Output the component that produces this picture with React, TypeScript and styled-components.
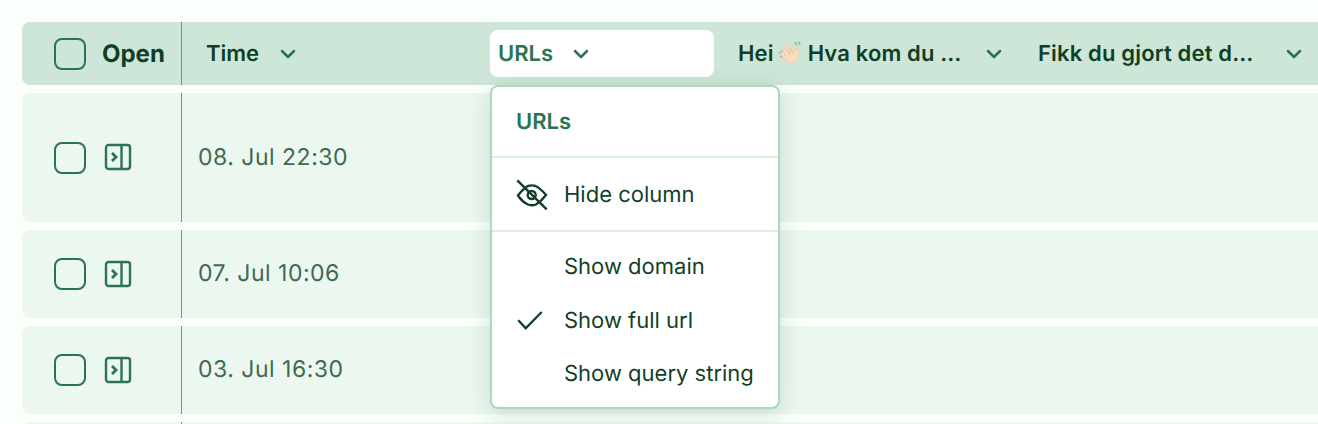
import React from 'react'
import styled, { createGlobalStyle } from 'styled-components'
import { ChevronDown } from 'lucide-react'

const GlobalStyle = createGlobalStyle`
  html, body {
    margin: 0;
    background: #fbfffc;
    font-family: Inter, "Liberation Sans", sans-serif;
    text-rendering: geometricPrecision;
  }
`

const rows = [
  { id: 1, time: '08. Jul 22:30', height: 129 },
  { id: 2, time: '07. Jul 10:06', height: 88 },
  { id: 3, time: '03. Jul 16:30', height: 88 },
  { id: 4, time: '', height: 88 },
]

const WaveIcon = () => (
  <svg width="26" height="26" viewBox="0 0 24 24">
    <path d="M1 11.500l3-2.500M2 15l2-1.500M15.500 1l2 3M18.500 .5l2 3" stroke="#9aaca4" strokeWidth="1.300" fill="none" />
    <path
      d="M5 7.500c.7-1.200 2-1 3 0L6.500 4.800c-.7-1.500 1.300-2.500 2.300-1.200l2.200 3-.6-1.600c-.4-1.500 1.700-2.200 2.400-.8l3.200 6 .6-2c.6-1.500 2.800-1.200 2.800.5 0 3-.2 5.800-1.200 8.500-1.500 4-6 5-9.200 2.800-2.500-1.800-4.800-5-6.500-8-.8-1.400 1-2.500 2-1.400L7 13.500 5 9.500c-.4-.8-.3-1.400 0-2z"
      fill="#f8dcbf"
      stroke="#ecc8a2"
      strokeWidth="0.600"
    />
    <path d="M8.500 7.500l3.200 5.500M11 6.500l3 5.200" stroke="#dcae84" strokeWidth="0.700" fill="none" />
  </svg>
)

const OpenIcon = () => (
  <svg width="28" height="28" viewBox="0 0 28 28" fill="none" stroke="#2c7350" strokeWidth="2.400">
    <rect x="2" y="2" width="24" height="24" rx="2.500" />
    <path d="M17.500 2v24" />
    <path d="M8 10l4 4-4 4" strokeWidth="2.800" />
  </svg>
)

const HiddenEyeIcon = () => (
  <svg width="32" height="32" viewBox="0 0 32 32" fill="none" stroke="#123f26" strokeWidth="2.400">
    <path d="M2 16.500c3-4 6-7.500 10-9.500 2.500-.8 5-.8 7.500 0 4.500 2 7.500 5.500 10.500 9-3 4-6 7-10 9.500-2.500 1-5.500 1-8 0-4-2-7.500-5-10-9z" />
    <circle cx="15.700" cy="16" r="4" />
    <path d="M1.300 1.300l29.400 29" />
  </svg>
)

const CheckIcon = () => (
  <svg width="32" height="32" viewBox="0 0 32 32" fill="none" stroke="#123f26" strokeWidth="2.400">
    <path d="M2.300 15.300l7.400 8L25.700 7" />
  </svg>
)

const App = () => {
  return (
    <Page>
      <GlobalStyle />
      <Table>
        <HeaderRow>
          <FixedCell>
            <Checkbox />
            <OpenLabel>Open</OpenLabel>
          </FixedCell>
          <TimeHeader>
            <HeaderLabel>Time</HeaderLabel>
            <Chevron size={24} strokeWidth={2.500} />
          </TimeHeader>
          <UrlsHeader>
            <UrlsButton>
              <HeaderLabel $active>URLs</HeaderLabel>
              <Chevron size={24} strokeWidth={2.500} />
            </UrlsButton>
            <Menu>
              <MenuTitle>URLs</MenuTitle>
              <MenuSection>
                <MenuItem>
                  <MenuIcon><HiddenEyeIcon /></MenuIcon>
                  Hide column
                </MenuItem>
              </MenuSection>
              <MenuOptions>
                <MenuItem>
                  <MenuIcon />
                  Show domain
                </MenuItem>
                <MenuItem>
                  <MenuIcon><CheckIcon /></MenuIcon>
                  Show full url
                </MenuItem>
                <MenuItem>
                  <MenuIcon />
                  Show query string
                </MenuItem>
              </MenuOptions>
            </Menu>
          </UrlsHeader>
          <QuestionHeader>
            <QuestionLabel>
              Hei<WaveIcon />Hva kom du …
            </QuestionLabel>
            <Chevron size={24} strokeWidth={2.500} />
          </QuestionHeader>
          <QuestionHeader>
            <QuestionLabel>Fikk du gjort det d…</QuestionLabel>
            <Chevron size={24} strokeWidth={2.500} />
          </QuestionHeader>
        </HeaderRow>
        {rows.map(row => (
          <Row key={row.id} $height={row.height}>
            <RowFixedCell>
              <Checkbox />
              <OpenIcon />
            </RowFixedCell>
            <TimeText>{row.time}</TimeText>
          </Row>
        ))}
      </Table>
    </Page>
  )
}

const Page = styled.div`
  width: 1318px;
  height: 424px;
  overflow: hidden;
  padding: 22px 0 0 22px;
  box-sizing: border-box;
`

const Table = styled.div`
  width: 1400px;
  display: flex;
  flex-direction: column;
  gap: 8px;
`

const HeaderRow = styled.div`
  height: 63px;
  display: flex;
  align-items: stretch;
  background: #cee6d8;
  border-radius: 8px;
`

const Row = styled.div<{ $height: number }>`
  height: ${props => props.$height}px;
  flex-shrink: 0;
  display: flex;
  align-items: stretch;
  background: #ecf7f0;
  border-radius: 8px;
`

const FixedCell = styled.div`
  width: 160px;
  box-sizing: border-box;
  flex-shrink: 0;
  display: flex;
  align-items: center;
  gap: 16px;
  padding-left: 32px;
  border-right: 1px solid #83897f;
`

const RowFixedCell = styled(FixedCell)`
  gap: 18px;

  svg {
    margin-bottom: 1px;
  }
`

const Checkbox = styled.div`
  width: 32px;
  height: 32px;
  box-sizing: border-box;
  border: 2px solid #2c7350;
  border-radius: 8px;
`

const OpenLabel = styled.span`
  font-size: 24px;
  font-weight: 700;
  color: #0f3f24;
`

const HeaderLabel = styled.span<{ $active?: boolean }>`
  font-size: 22px;
  font-weight: 600;
  color: ${props => (props.$active ? '#2c7350' : '#0f3f24')};
`

const Chevron = styled(ChevronDown)`
  color: #2c7350;
  flex-shrink: 0;
`

const TimeHeader = styled.div`
  width: 308px;
  box-sizing: border-box;
  flex-shrink: 0;
  display: flex;
  align-items: center;
  gap: 17px;
  padding-left: 24px;
`

const UrlsHeader = styled.div`
  position: relative;
  width: 240px;
  flex-shrink: 0;
  display: flex;
  align-items: center;
`

const UrlsButton = styled.div`
  width: 224px;
  height: 47px;
  box-sizing: border-box;
  display: flex;
  align-items: center;
  gap: 16px;
  padding-left: 8px;
  background: #ffffff;
  border-radius: 8px;
`

const QuestionHeader = styled.div`
  width: 300px;
  box-sizing: border-box;
  flex-shrink: 0;
  display: flex;
  align-items: center;
  padding-left: 8px;
`

const QuestionLabel = styled.span`
  width: 244px;
  flex-shrink: 0;
  display: flex;
  align-items: center;
  gap: 4px;
  font-size: 22px;
  font-weight: 600;
  letter-spacing: 0.15px;
  color: #0f3f24;
  white-space: pre;
`

const TimeText = styled.div`
  display: flex;
  align-items: center;
  padding: 0 0 2px 16px;
  font-size: 23px;
  letter-spacing: 0.5px;
  color: #3f6b52;
`

const Menu = styled.div`
  position: absolute;
  top: 63px;
  left: 0;
  width: 290px;
  height: 324px;
  box-sizing: border-box;
  background: #ffffff;
  border: 2px solid #acd8bd;
  border-radius: 8px;
  box-shadow: 0 6px 24px rgba(44, 115, 80, 0.2);
  z-index: 2;
`

const MenuTitle = styled.div`
  height: 71px;
  box-sizing: border-box;
  display: flex;
  align-items: center;
  padding-left: 24px;
  font-size: 22px;
  font-weight: 600;
  color: #2c7350;
  border-bottom: 2px solid #dcefe3;
`

const MenuSection = styled.div`
  height: 74px;
  box-sizing: border-box;
  padding-top: 1px;
  display: flex;
  align-items: center;
  border-bottom: 2px solid #dcefe3;
`

const MenuOptions = styled.div`
  display: flex;
  flex-direction: column;
  padding-top: 8.400px;
`

const MenuItem = styled.div`
  height: 53.500px;
  display: flex;
  align-items: center;
  gap: 16px;
  padding-left: 24px;
  font-size: 22px;
  color: #123f26;
  width: 100%;
`

const MenuIcon = styled.span`
  width: 32px;
  height: 32px;
  flex-shrink: 0;
  display: flex;
  align-items: center;
  justify-content: center;
`

export default App
